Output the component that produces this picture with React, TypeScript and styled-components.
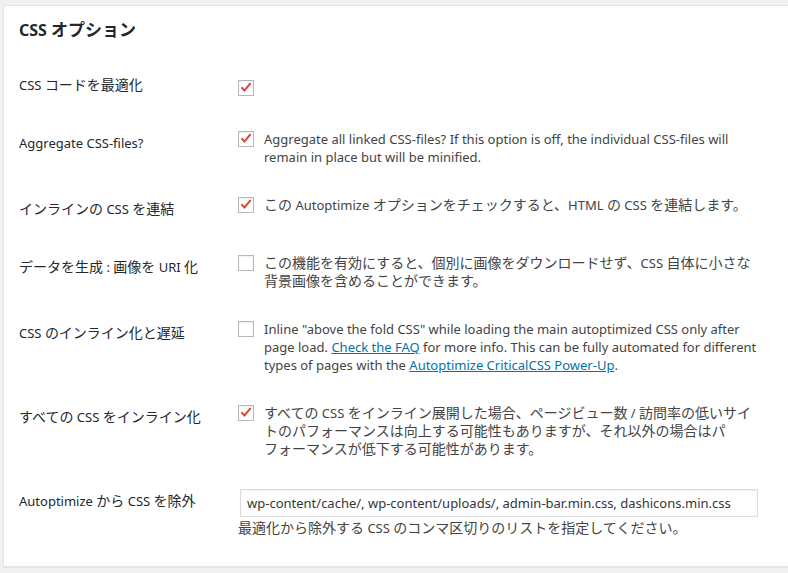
import React from "react";
import styled, { createGlobalStyle } from "styled-components";

const Global = createGlobalStyle`
  html, body { margin: 0; padding: 0; background: #f1f1f1; }
  body {
    font-family: "Noto Sans", "Noto Sans CJK JP", sans-serif;
    font-size: 13px;
    color: #444;
  }
`;

const Postbox = styled.div`
  margin: 5px 5px 4px 3px;
  width: 778px;
  background: #fff;
  border: 1px solid #e5e5e5;
  box-shadow: 0 1px 1px rgba(0, 0, 0, 0.04);
  padding: 0 0 14px 15px;
`;

const Title = styled.h2`
  margin: 0;
  padding: 14px 0 17px;
  height: 20px;
  font-size: 16px;
  line-height: 20px;
  font-weight: 700;
  color: #23282d;
`;

const Ja = styled.span<{ $size?: number }>`
  font-family: "Noto Sans CJK JP", sans-serif;
  font-size: ${(p) => p.$size ?? 14}px;
  line-height: 0;
`;

const Row = styled.div`
  display: flex;
  align-items: flex-start;
`;

const Th = styled.div`
  width: 219px;
  flex: none;
  padding: 19px 0 21px;
  line-height: 18px;
  height: 18px;
  color: #23282d;
  white-space: nowrap;
`;

const Td = styled.div`
  flex: 1;
  padding: 15px 10px 15px 0;
  line-height: 18px;
`;

const CheckLine = styled.div`
  display: flex;
  align-items: flex-start;
  gap: 10px;
`;

const Box = styled.span<{ $offset: number }>`
  flex: none;
  width: 16px;
  height: 16px;
  box-sizing: border-box;
  border: 1px solid #b4b9be;
  background: #fff;
  box-shadow: inset 0 1px 2px rgba(0, 0, 0, 0.07);
  margin-top: ${(p) => p.$offset}px;
  display: flex;
  align-items: center;
  justify-content: center;
`;

const Desc = styled.div`
  white-space: nowrap;
`;

const Line = styled.div`
  height: 18px;
`;

const Link = styled.a`
  color: #0073aa;
  text-decoration: underline;
`;

const Input = styled.div`
  width: 518px;
  height: 28px;
  box-sizing: border-box;
  margin-left: 2px;
  margin-top: 1px;
  border: 1px solid #ddd;
  box-shadow: inset 0 1px 2px rgba(0, 0, 0, 0.07);
  padding: 0 6px;
  display: flex;
  align-items: center;
  color: #32373c;
  white-space: nowrap;
`;

const Hint = styled.div`
  margin-top: 2px;
  white-space: nowrap;
  height: 18px;
`;

const CJK = /([\u3000-\u30ff\u4e00-\u9fff\uff00-\uffef]+)/;

function jp(text: string, size?: number): React.ReactNode[] {
  return text.split(CJK).map((part, i) =>
    i % 2 === 1 ? (
      <Ja key={i} $size={size}>
        {part}
      </Ja>
    ) : (
      <React.Fragment key={i}>{part}</React.Fragment>
    )
  );
}

const Check: React.FC<{ checked?: boolean; offset?: number }> = ({ checked, offset = 1 }) => (
  <Box $offset={offset}>
    {checked && (
      <svg width="14" height="14" viewBox="0 0 14 14">
        <path d="M1.8 7.1 L5.5 10.9 L12.4 2.7 L10.8 1.4 L5.4 7.9 L3.3 5.6 Z" fill="#d9473a" />
      </svg>
    )}
  </Box>
);

const Lines: React.FC<{ lines: React.ReactNode[] }> = ({ lines }) => (
  <Desc>
    {lines.map((l, i) => (
      <Line key={i}>{typeof l === "string" ? jp(l) : l}</Line>
    ))}
  </Desc>
);

export default function App() {
  return (
    <>
      <Global />
      <Postbox>
        <Title>{jp("CSS オプション", 17)}</Title>

        <Row>
          <Th>{jp("CSS コードを最適化")}</Th>
          <Td>
            <CheckLine>
              <Check checked offset={8} />
            </CheckLine>
          </Td>
        </Row>

        <Row>
          <Th>Aggregate CSS-files?</Th>
          <Td>
            <CheckLine>
              <Check checked />
              <Lines
                lines={[
                  "Aggregate all linked CSS-files? If this option is off, the individual CSS-files will",
                  "remain in place but will be minified.",
                ]}
              />
            </CheckLine>
          </Td>
        </Row>

        <Row>
          <Th>{jp("インラインの CSS を連結")}</Th>
          <Td>
            <CheckLine>
              <Check checked />
              <Lines lines={["この Autoptimize オプションをチェックすると、HTML の CSS を連結します。"]} />
            </CheckLine>
          </Td>
        </Row>

        <Row>
          <Th>{jp("データを生成 : 画像を URI 化")}</Th>
          <Td>
            <CheckLine>
              <Check />
              <Lines
                lines={[
                  "この機能を有効にすると、個別に画像をダウンロードせず、CSS 自体に小さな",
                  "背景画像を含めることができます。",
                ]}
              />
            </CheckLine>
          </Td>
        </Row>

        <Row>
          <Th>{jp("CSS のインライン化と遅延")}</Th>
          <Td>
            <CheckLine>
              <Check />
              <Lines
                lines={[
                  'Inline "above the fold CSS" while loading the main autoptimized CSS only after',
                  <>
                    page load. <Link>Check the FAQ</Link> for more info. This can be fully automated for different
                  </>,
                  <>
                    types of pages with the <Link>Autoptimize CriticalCSS Power-Up</Link>.
                  </>,
                ]}
              />
            </CheckLine>
          </Td>
        </Row>

        <Row>
          <Th>{jp("すべての CSS をインライン化")}</Th>
          <Td>
            <CheckLine>
              <Check checked />
              <Lines
                lines={[
                  "すべての CSS をインライン展開した場合、ページビュー数 / 訪問率の低いサイ",
                  "トのパフォーマンスは向上する可能性もありますが、それ以外の場合はパ",
                  "フォーマンスが低下する可能性があります。",
                ]}
              />
            </CheckLine>
          </Td>
        </Row>

        <Row>
          <Th>{jp("Autoptimize から CSS を除外")}</Th>
          <Td>
            <Input>wp-content/cache/, wp-content/uploads/, admin-bar.min.css, dashicons.min.css</Input>
            <Hint>{jp("最適化から除外する CSS のコンマ区切りのリストを指定してください。")}</Hint>
          </Td>
        </Row>
      </Postbox>
    </>
  );
}
